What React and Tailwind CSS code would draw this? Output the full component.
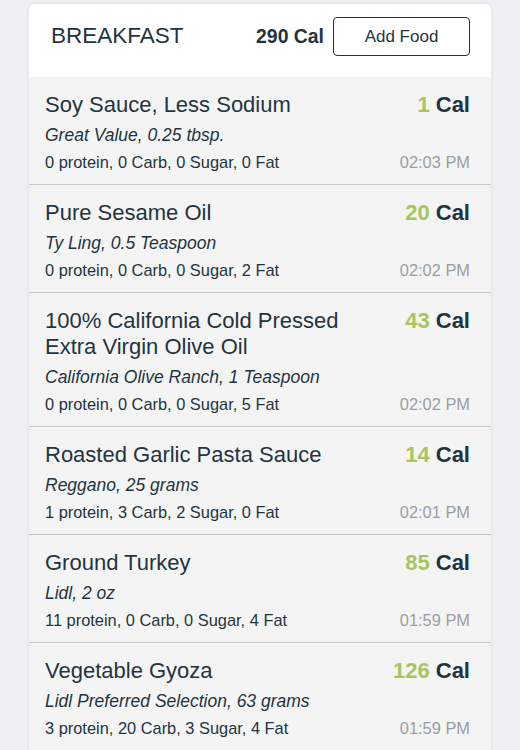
import React from 'react';

const foods = [
    { name: "Soy Sauce, Less Sodium", cal: 1, serving: "Great Value, 0.25 tbsp.", macros: "0 protein, 0 Carb, 0 Sugar, 0 Fat", time: "02:03 PM" },
    { name: "Pure Sesame Oil", cal: 20, serving: "Ty Ling, 0.5 Teaspoon", macros: "0 protein, 0 Carb, 0 Sugar, 2 Fat", time: "02:02 PM" },
    { name: "100% California Cold Pressed Extra Virgin Olive Oil", cal: 43, serving: "California Olive Ranch, 1 Teaspoon", macros: "0 protein, 0 Carb, 0 Sugar, 5 Fat", time: "02:02 PM" },
    { name: "Roasted Garlic Pasta Sauce", cal: 14, serving: "Reggano, 25 grams", macros: "1 protein, 3 Carb, 2 Sugar, 0 Fat", time: "02:01 PM" },
    { name: "Ground Turkey", cal: 85, serving: "Lidl, 2 oz", macros: "11 protein, 0 Carb, 0 Sugar, 4 Fat", time: "01:59 PM" },
    { name: "Vegetable Gyoza", cal: 126, serving: "Lidl Preferred Selection, 63 grams", macros: "3 protein, 20 Carb, 3 Sugar, 4 Fat", time: "01:59 PM" },
];

const FoodRow = ({ food, first }) => (
    <div className={first ? "bg-[#f4f4f5] pl-4 pr-[21px] pt-[15px] pb-[11px]" : "border-t border-[#c4c6c8] bg-[#f4f4f5] pl-4 pr-[21px] pt-[15px] pb-[11px]"}>
        <div className="flex items-start justify-between gap-4">
            <div className="text-[22px] leading-[26px] text-[#1f3440] max-w-[310px]">{food.name}</div>
            <div className="text-[22px] leading-[26px] font-bold whitespace-nowrap">
                <span className="text-[#a6c55c]">{food.cal}</span> <span className="text-[#1f3440]">Cal</span>
            </div>
        </div>
        <div className="mt-[5px] text-[17.5px] leading-[24px] italic text-[#1f3440]">{food.serving}</div>
        <div className="mt-[4px] flex justify-between text-[16.4px] leading-[22px]">
            <span className="text-[#1f3440]">{food.macros}</span>
            <span className="text-[#9b9d9f]">{food.time}</span>
        </div>
    </div>
);

export default function App() {
    return (
        <div className="min-h-[750px] bg-[#eef0f3] pt-1 font-['Liberation_Sans',Arial,sans-serif]">
            <div className="mx-[29px] w-[462px] overflow-hidden rounded-t-md bg-white shadow-[0_0_4px_rgba(0,0,0,0.08)]">
                <div className="flex h-[73px] items-start pt-[13px] pl-[22px] pr-[21px]">
                    <div className="flex-1 pt-[6px] text-[22.5px] leading-[26px] text-[#1f3440]">BREAKFAST</div>
                    <div className="mr-[9px] pt-[7px] text-[19.4px] leading-[24px] font-bold text-[#1f3440]">290 Cal</div>
                    <button className="h-[39px] w-[137px] rounded-[4px] border border-[#1f3440] text-[17px] text-[#1f3440]">Add Food</button>
                </div>
                {foods.map((food, i) => (
                    <FoodRow key={food.name} food={food} first={i === 0} />
                ))}
            </div>
        </div>
    );
}
